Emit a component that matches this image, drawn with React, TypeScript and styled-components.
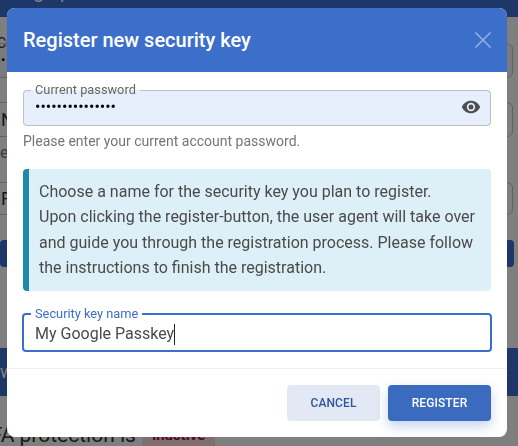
import React from "react";
import styled, { createGlobalStyle } from "styled-components";

const Global = createGlobalStyle`
  html, body { margin: 0; padding: 0; height: 100%; overflow: hidden; background: #fff; }
  body { font-family: Roboto, "Liberation Sans", sans-serif; color: #333; }
  * { box-sizing: border-box; }
`;

const Page = styled.div`
  width: 518px;
  height: 446px;
  overflow: hidden;
  display: flex;
  flex-direction: column;
`;
const TopBar = styled.div`
  height: 17px;
  flex: none;
  overflow: hidden;
  background: #386ed0;
  margin-bottom: 26px;
`;
const TopTitle = styled.div`
  margin: -21px 0 0 -13px;
  font-size: 20px;
  line-height: 24px;
  color: #fff;
  white-space: nowrap;
`;
const GhostField = styled.div<{ $h: number; $mb: number; $tint?: boolean }>`
  flex: none;
  width: 523px;
  margin-left: -10px;
  height: ${(p) => p.$h}px;
  margin-bottom: ${(p) => p.$mb}px;
  border: 1px solid #c4c4c4;
  border-radius: 6px;
  background: ${(p) => (p.$tint ? "#f2f7fd" : "#fff")};
  padding-left: 10px;
  font-size: 18px;
  line-height: ${(p) => p.$h - 2}px;
  color: #333;
  white-space: nowrap;
`;
const GhostLabel = styled.div`
  font-size: 14px;
  line-height: 14px;
  margin: -8px 0 0 -4px;
`;
const GhostDots = styled.div`
  font-size: 13px;
  line-height: 14px;
  color: #000;
  letter-spacing: 1px;
  margin-top: 3px;
`;
const GhostHint = styled.div`
  height: 16px;
  margin: 0 0 21px;
  font-size: 16px;
  line-height: 16px;
  color: #777;
  flex: none;
`;
const GhostChip = styled.div`
  flex: none;
  width: 514px;
  height: 27px;
  border-radius: 4px;
  background: #386ed0;
  margin-bottom: 81px;
`;
const GhostBar = styled.div`
  flex: none;
  height: 48px;
  background: #386ed0;
  color: #fff;
  font-size: 18px;
  line-height: 48px;
  margin-bottom: 24px;
`;
const StatusLine = styled.div`
  flex: none;
  display: flex;
  align-items: center;
  gap: 6px;
  margin-left: -21px;
  font-size: 21px;
  line-height: 26px;
  color: #333;
  white-space: nowrap;
`;
const Badge = styled.span`
  background: #ffdde1;
  color: #b0102f;
  font-size: 15px;
  font-weight: 700;
  padding: 2px 10px;
  border-radius: 3px;
  width: 73px;
  text-align: center;
`;

const Overlay = styled.div`
  position: fixed;
  inset: 0;
  background: rgba(0, 0, 0, 0.5);
  padding: 8px 11px 9px 7px;
  display: flex;
`;
const Modal = styled.div`
  width: 500px;
  height: 429px;
  background: #fff;
  border-radius: 8px;
  overflow: hidden;
  display: flex;
  flex-direction: column;
`;
const Header = styled.header`
  flex: none;
  height: 64px;
  background: #3b6fc9;
  display: flex;
  align-items: center;
  justify-content: space-between;
  padding: 0 16px;
`;
const Title = styled.h2`
  margin: 0;
  font-size: 20px;
  font-weight: 500;
  color: #fff;
`;
const CloseButton = styled.button`
  width: 16px;
  height: 16px;
  padding: 0;
  border: 0;
  background: none;
  display: block;
  color: rgba(255, 255, 255, 0.5);
`;
const Body = styled.div`
  flex: 1;
  padding: 11px 16px 0;
  display: flex;
  flex-direction: column;
`;
const Outline = styled.fieldset<{ $focus?: boolean }>`
  margin: 0;
  min-width: 0;
  padding: 0 11px;
  display: flex;
  align-items: center;
  border-radius: 4px;
  border: ${(p) => (p.$focus ? "2px solid #3b6fc9" : "1px solid #bdbdbd")};
  background: ${(p) => (p.$focus ? "#fff" : "#e7effc")};
  margin-inline: ${(p) => (p.$focus ? "-1px" : "0")};
  height: ${(p) => (p.$focus ? 45 : 43)}px;
`;
const Legend = styled.legend<{ $focus?: boolean }>`
  padding: 0 4px;
  margin-left: -4px;
  font-size: 12.8px;
  line-height: 14px;
  color: ${(p) => (p.$focus ? "#3b6fc9" : "#666")};
`;
const PasswordInput = styled.input`
  flex: 1;
  min-width: 0;
  border: 0;
  padding: 0;
  outline: none;
  background: transparent;
  font: 16px Roboto, sans-serif;
  line-height: 18px;
  height: 18px;
  color: #000;
`;
const EyeButton = styled.button`
  flex: none;
  width: 20px;
  height: 20px;
  padding: 0;
  border: 0;
  margin-right: -2px;
  background: none;
  color: #4f4f4f;
`;
const Helper = styled.p`
  margin: 7px 0 0;
  font-size: 14px;
  line-height: 16px;
  color: #757575;
`;
const Notice = styled.div`
  margin-top: 20px;
  padding: 10px;
  background: #def0f7;
  border-left: 6px solid #2089ab;
  border-radius: 4px;
  font-size: 16px;
  line-height: 25.4px;
  color: #4a4a4a;
`;
const NameRow = styled.div`
  margin-top: 16px;
`;
const NameValue = styled.div`
  font-size: 16px;
  line-height: 22px;
  color: #4a4a4a;
  display: flex;
  align-items: center;
  margin-top: -2px;
`;
const Caret = styled.span`
  width: 1px;
  height: 21px;
  background: #222;
`;
const Footer = styled.footer`
  flex: none;
  height: 69px;
  border-top: 1px solid #f0f0f0;
  padding: 16px 16px 0;
  display: flex;
  justify-content: flex-end;
  align-items: flex-start;
  gap: 8px;
`;
const ActionButton = styled.button<{ $primary?: boolean }>`
  height: 36px;
  width: ${(p) => (p.$primary ? 103 : 93)}px;
  border: 0;
  border-radius: 4px;
  font-family: Roboto, sans-serif;
  font-size: 12px;
  font-weight: 500;
  letter-spacing: 0.1px;
  text-transform: uppercase;
  background: ${(p) => (p.$primary ? "#3b6bbf" : "#e2e9f5")};
  color: ${(p) => (p.$primary ? "#fff" : "#2f5597")};
  box-shadow: ${(p) => (p.$primary ? "0 5px 12px rgba(59,107,191,.3)" : "none")};
`;

export default function App() {
  return (
    <Page>
      <Global />
      <TopBar>
        <TopTitle>Change password</TopTitle>
      </TopBar>
      <GhostField $h={35} $mb={24} $tint>
        <GhostLabel>Current password</GhostLabel>
        <GhostDots>•••••••••••••••</GhostDots>
      </GhostField>
      <GhostField $h={35} $mb={8}>New password</GhostField>
      <GhostHint>e.g.</GhostHint>
      <GhostField $h={33} $mb={25}>Repeat new password</GhostField>
      <GhostChip />
      <GhostBar>w</GhostBar>
      <StatusLine>
        2FA protection is <Badge>Inactive</Badge>
      </StatusLine>
      <Overlay>
        <Modal>
          <Header>
            <Title>Register new security key</Title>
            <CloseButton aria-label="Close">
              <svg width="16" height="16" viewBox="0 0 16 16" fill="none" stroke="currentColor" strokeWidth="1.4">
                <path d="M0.5 0.5 15.5 15.5M15.5 0.5 0.5 15.5" />
              </svg>
            </CloseButton>
          </Header>
          <Body>
            <Outline>
              <Legend>Current password</Legend>
              <PasswordInput type="password" defaultValue="correcthorse123" />
              <EyeButton aria-label="Show password">
                <svg width="20" height="20" viewBox="0 0 24 24" fill="currentColor">
                  <path d="M12,9A3,3 0 0,0 9,12A3,3 0 0,0 12,15A3,3 0 0,0 15,12A3,3 0 0,0 12,9M12,17A5,5 0 0,1 7,12A5,5 0 0,1 12,7A5,5 0 0,1 17,12A5,5 0 0,1 12,17M12,4.5C7,4.5 2.73,7.61 1,12C2.73,16.39 7,19.5 12,19.5C17,19.5 21.27,16.39 23,12C21.27,7.61 17,4.5 12,4.5Z" />
                </svg>
              </EyeButton>
            </Outline>
            <Helper>Please enter your current account password.</Helper>
            <Notice>
              Choose a name for the security key you plan to register.
              <br />
              Upon clicking the register-button, the user agent will take over and guide you through the registration process. Please follow the instructions to finish the registration.
            </Notice>
            <NameRow>
              <Outline $focus>
                <Legend $focus>Security key name</Legend>
                <NameValue>
                  My Google Passkey
                  <Caret />
                </NameValue>
              </Outline>
            </NameRow>
          </Body>
          <Footer>
            <ActionButton>Cancel</ActionButton>
            <ActionButton $primary>Register</ActionButton>
          </Footer>
        </Modal>
      </Overlay>
    </Page>
  );
}
